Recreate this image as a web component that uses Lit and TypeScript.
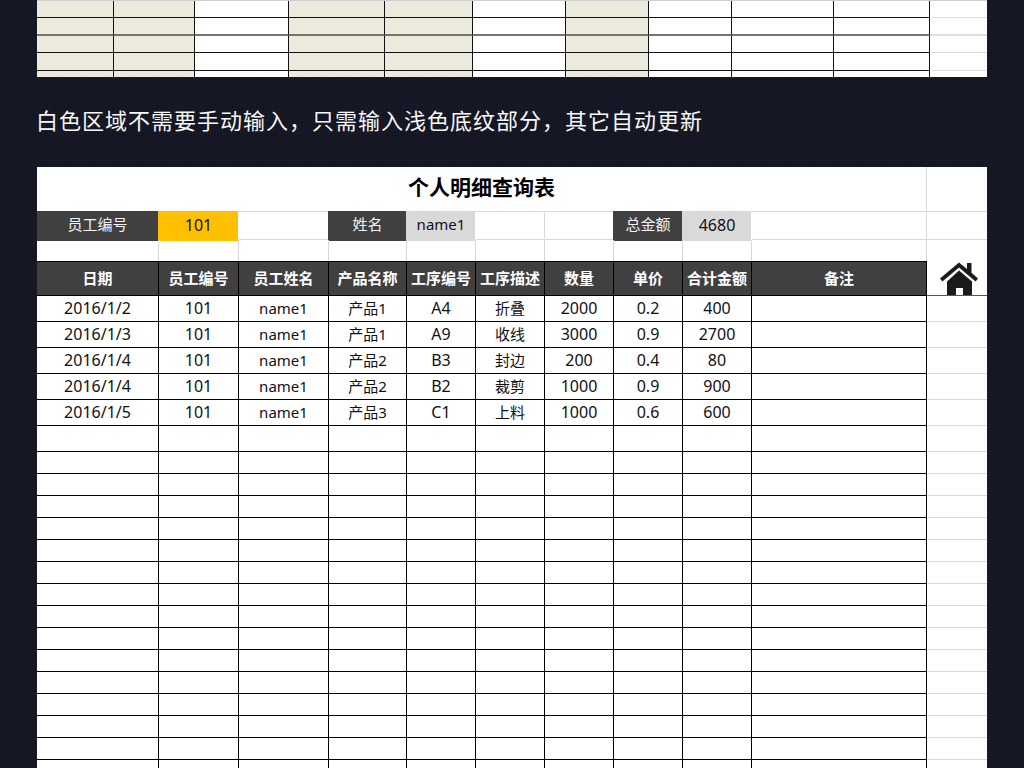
import { LitElement, html, css, svg } from "lit";
import { customElement } from "lit/decorators.js";

const topColumns = [77, 81, 94, 96, 88, 93, 83, 83, 102, 96, 57];
const topFilled = new Set([0, 1, 3, 4, 6]);
const topRows = [
  { h: 17, line: "black" },
  { h: 18, line: "soft" },
  { h: 17, line: "black" },
  { h: 18, line: "black" },
  { h: 6, line: "none" },
];

const headers = ["日期", "员工编号", "员工姓名", "产品名称", "工序编号", "工序描述", "数量", "单价", "合计金额", "备注"];
const records = [
  ["2016/1/2", "101", "name1", "产品1", "A4", "折叠", "2000", "0.2", "400", ""],
  ["2016/1/3", "101", "name1", "产品1", "A9", "收线", "3000", "0.9", "2700", ""],
  ["2016/1/4", "101", "name1", "产品2", "B3", "封边", "200", "0.4", "80", ""],
  ["2016/1/4", "101", "name1", "产品2", "B2", "裁剪", "1000", "0.9", "900", ""],
  ["2016/1/5", "101", "name1", "产品3", "C1", "上料", "1000", "0.6", "600", ""],
];
const numeric = /^[A-Z\d./]+$/;

const homeIcon = svg`<polygon points="19,0.5 27,7 27,1 31.5,1 31.5,10.7 38,16.5 35.6,19.4 19,5.4 2.4,19.4 0,16.5" fill="#1c1a1a"/>
  <polygon points="19,8.6 32,19.6 32,33 23,33 23,26 16,26 16,33 7,33 7,19.6" fill="#1c1a1a"/>`;

@customElement("app-root")
export class AppRoot extends LitElement {
  static styles = css`
    :host {
      display: block;
      width: 1024px;
      height: 768px;
      overflow: hidden;
      box-sizing: border-box;
      padding: 0 37px;
      background-color: #161825;
      background-image:
        repeating-linear-gradient(90deg, rgba(255, 255, 255, 0.015) 0 1px, transparent 1px 3px),
        repeating-linear-gradient(0deg, rgba(0, 0, 0, 0.16) 0 1px, transparent 1px 2px);
      font-family: "Noto Sans", "Noto Sans CJK SC", sans-serif;
      color: #111;
    }
    .top {
      height: 77px;
      overflow: hidden;
      background: #fff;
      border-top: 1px solid #cfcfcf;
      box-sizing: border-box;
    }
    .top-row {
      display: grid;
      box-sizing: border-box;
    }
    .tc {
      box-sizing: border-box;
      border-right: 1px solid #111;
      border-bottom: 1px solid #111;
    }
    .tc.filled {
      background: #ece9dd;
    }
    .tc.soft {
      border-bottom-color: #77736c;
      border-bottom-width: 2px;
    }
    .tc.none {
      border-bottom: 0;
    }
    .tc.edge {
      border-right: 0;
      border-bottom-color: #dedede;
    }
    .banner {
      height: 90px;
      display: flex;
      align-items: center;
      color: #f8f8f8;
      font-size: 22px;
      letter-spacing: 1px;
      line-height: 1;
      padding-bottom: 4px;
      box-sizing: border-box;
      white-space: nowrap;
      margin-left: -1px;
    }
    .sheet {
      background: #fff;
      font-size: 15px;
      line-height: 1;
    }
    .title {
      height: 45px;
      display: grid;
      grid-template-columns: 890px 60px;
      box-sizing: border-box;
      border-bottom: 1px solid #d9d9d9;
    }
    .title h1 {
      margin: 0;
      font-size: 21px;
      font-weight: 700;
      color: #000;
      display: flex;
      align-items: center;
      justify-content: center;
      border-right: 1px solid #d9d9d9;
      padding-bottom: 3px;
    }
    .row {
      display: grid;
      grid-template-columns: 122px 80px 90px 78px 69px 69px 69px 69px 69px 175px 60px;
      box-sizing: border-box;
    }
    .info { height: 28px; }
    .blank { height: 21px; }
    .head { height: 35px; }
    .rec { height: 26px; }
    .empty { height: 22px; }
    .c {
      box-sizing: border-box;
      display: flex;
      align-items: center;
      justify-content: center;
      white-space: nowrap;
      border-right: 1px solid #000;
      border-bottom: 1px solid #000;
    }
    .c.num {
      font-size: 16px;
      padding-bottom: 1px;
    }
    .c.last {
      border-right: 0;
      border-bottom-color: #d9d9d9;
    }
    .g {
      border-right-color: #d9d9d9;
      border-bottom-color: #d9d9d9;
    }
    .g.open {
      border-right: 0;
    }
    .label, .value {
      margin: -1px 1px -1px -1px;
      border: 0;
      padding-left: 1px;
      padding-bottom: 3px;
    }
    .label.first {
      margin-left: 0;
      padding-left: 0;
    }
    .label {
      background: #404040;
      color: #f2f2f2;
    }
    .value.num { padding-bottom: 2px; }
    .value.yellow { background: #ffc000; }
    .value.grey { background: #d9d9d9; }
    .g.blankcell {
      border-bottom: 0;
    }
    .head .c {
      background: #404040;
      color: #fff;
      font-weight: 700;
      border-top: 1px solid #000;
      padding-bottom: 1px;
    }
    .head .c.home {
      background: #fff;
      border: 0;
      border-bottom: 1px solid #555;
      padding: 0;
      position: relative;
    }
    .home svg {
      position: absolute;
      left: 13px;
      top: 1px;
      width: 38px;
      height: 34px;
    }
  `;

  private renderTop() {
    const template = topColumns.map((w) => `${w}px`).join(" ");
    return html`<div class="top">
      ${topRows.map(
        (r) => html`<div class="top-row" style="grid-template-columns:${template};height:${r.h}px">
          ${topColumns.map((_, i) => {
            const cls = ["tc"];
            if (topFilled.has(i)) cls.push("filled");
            if (r.line !== "black") cls.push(r.line);
            if (i === topColumns.length - 1) cls.push("edge");
            return html`<div class=${cls.join(" ")}></div>`;
          })}
        </div>`
      )}
    </div>`;
  }

  private renderInfo() {
    return html`<div class="row info">
      <div class="c label first">员工编号</div>
      <div class="c value yellow num">101</div>
      <div class="c g"></div>
      <div class="c label">姓名</div>
      <div class="c value grey">name1</div>
      <div class="c g"></div>
      <div class="c g"></div>
      <div class="c label">总金额</div>
      <div class="c value grey num">4680</div>
      <div class="c g"></div>
      <div class="c last"></div>
    </div>`;
  }

  private renderBlank() {
    return html`<div class="row blank">
      ${Array.from({ length: 11 }, (_, i) =>
        html`<div class="c g blankcell ${i === 10 ? "open" : ""}"></div>`
      )}
    </div>`;
  }

  private renderRecord(cells: string[], cls: string) {
    return html`<div class="row ${cls}">
      ${cells.map((t) => html`<div class="c ${numeric.test(t) ? "num" : ""}">${t}</div>`)}
      <div class="c last"></div>
    </div>`;
  }

  render() {
    const empties = Array.from({ length: 15 }, () => Array(10).fill("") as string[]);
    return html`
      ${this.renderTop()}
      <div class="banner">白色区域不需要手动输入，只需输入浅色底纹部分，其它自动更新</div>
      <div class="sheet">
        <div class="title"><h1>个人明细查询表</h1><div></div></div>
        ${this.renderInfo()}
        ${this.renderBlank()}
        <div class="row head">
          ${headers.map((h) => html`<div class="c">${h}</div>`)}
          <div class="c home"><svg viewBox="0 0 38 34">${homeIcon}</svg></div>
        </div>
        ${records.map((r) => this.renderRecord(r, "rec"))}
        ${this.renderRecord(empties[0], "rec")}
        ${empties.map((r) => this.renderRecord(r, "empty"))}
      </div>
    `;
  }
}
